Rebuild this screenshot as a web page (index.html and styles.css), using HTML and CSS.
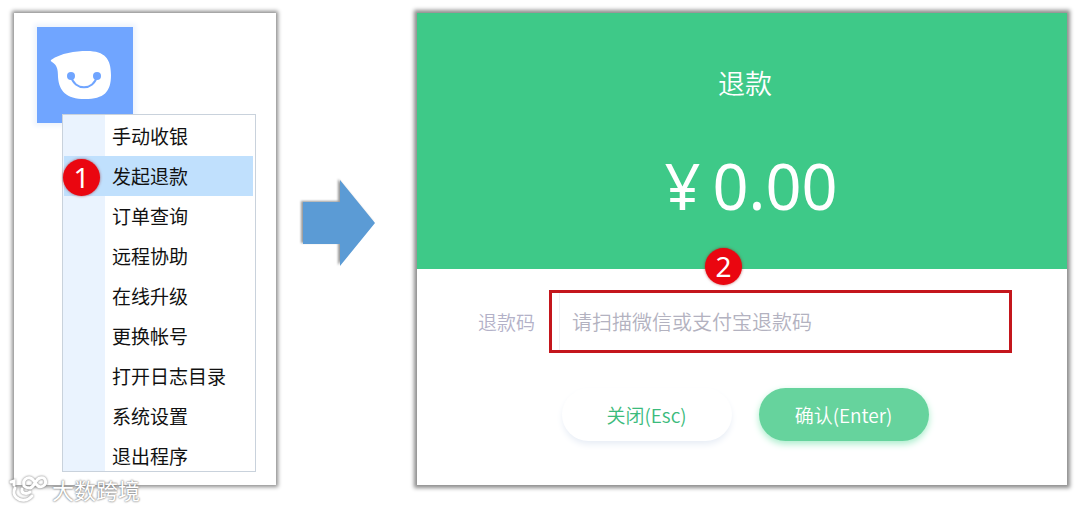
FILE: index.html
```
<!DOCTYPE html>
<html lang="zh-CN">
<head>
    <meta charset="UTF-8">
    <meta name="viewport" content="width=device-width, initial-scale=1.0">
    <title>发起退款</title>
    <link rel="stylesheet" href="styles.css">
</head>
<body>
    <main class="guide">
        <section class="panel menu-panel">
            <div class="app-icon">
                <svg viewBox="0 0 96 96" role="img" aria-label="收银助手">
                    <path fill="#fff" d="M14 33 C24 26 38 24 50 24 C68 24 74 32 74 48 C74 65 67 72 48 72 C29 72 22 64 21 50 C21 42 20 38 15 35 Q13 34 14 33 Z"/>
                    <circle cx="34" cy="49" r="4" fill="#70a5ff"/>
                    <circle cx="60" cy="49" r="4" fill="#70a5ff"/>
                    <path fill="none" stroke="#70a5ff" stroke-width="2" d="M34 49 C37 64 57 64 60 49"/>
                </svg>
            </div>
            <nav class="menu">
                <ul class="menu-list">
                    <li><button class="menu-item" type="button">手动收银</button></li>
                    <li>
                        <button class="menu-item active" type="button">发起退款</button>
                        <span class="step step-menu">1</span>
                    </li>
                    <li><button class="menu-item" type="button">订单查询</button></li>
                    <li><button class="menu-item" type="button">远程协助</button></li>
                    <li><button class="menu-item" type="button">在线升级</button></li>
                    <li><button class="menu-item" type="button">更换帐号</button></li>
                    <li><button class="menu-item" type="button">打开日志目录</button></li>
                    <li><button class="menu-item" type="button">系统设置</button></li>
                    <li><button class="menu-item" type="button">退出程序</button></li>
                </ul>
            </nav>
        </section>

        <svg class="arrow" viewBox="0 0 72 86" aria-hidden="true">
            <path fill="#5b9bd5" d="M0 22 H37 V0 L72 43 L37 86 V64 H0 Z"/>
        </svg>

        <section class="panel refund">
            <header class="refund-header">
                <h1 class="refund-title">退款</h1>
                <p class="amount"><span class="currency">¥</span>0.00</p>
            </header>
            <form class="refund-form">
                <div class="field">
                    <label class="field-label" for="code">退款码</label>
                    <div class="field-box">
                        <input class="field-input" id="code" type="text" placeholder="请扫描微信或支付宝退款码">
                        <span class="step step-field">2</span>
                    </div>
                </div>
                <div class="actions">
                    <button class="btn btn-close" type="button">关闭(Esc)</button>
                    <button class="btn btn-confirm" type="button">确认(Enter)</button>
                </div>
            </form>
        </section>
    </main>

    <div class="watermark">
        <svg class="watermark-logo" viewBox="0 0 38 28" aria-hidden="true">
            <path d="M1 7 L4 6 V10 M5 13 C1 21 9 26 15 25 C18 25 20 23 22 21 M20 17 C16 20 11 18 12 14"/>
            <path d="M14 11 C12 3 20 0 24 6 C27 11 29 13 33 11 C38 8 35 1 30 3 C25 4 25 12 20 13 C17 13 15 12 14 11"/>
        </svg>
        <span>大数跨境</span>
    </div>
</body>
</html>
```

FILE: styles.css
```
* {
    margin: 0;
    padding: 0;
    box-sizing: border-box;
}

body {
    font-family: 'Noto Sans CJK SC', 'Noto Sans', sans-serif;
    color: #111;
    background: #fff;
    position: relative;
}

button,
input {
    font-family: inherit;
    border: none;
    background: none;
}

.guide {
    display: flex;
    align-items: stretch;
    padding: 13px 13px 24px 14px;
}

.panel {
    background: #fff;
}

/* 左侧菜单 */
.menu-panel {
    width: 262px;
    padding: 14px 20px 13px 23px;
    box-shadow: 0 0 4px 2px rgba(0, 0, 0, 0.45);
}

.app-icon {
    width: 96px;
    height: 96px;
    background: #70a5ff;
    box-shadow: 0 0 5px 3px #edf3fc;
}

.app-icon svg {
    display: block;
}

.menu {
    position: relative;
    margin: -9px 0 0 25px;
    padding: 1px 2px 0 1px;
    border: 1px solid #c9d2dc;
    background: linear-gradient(to right, #eaf3fe 42px, #fff 42px);
}

.menu-list {
    list-style: none;
    margin-bottom: -5px;
}

.menu-list li {
    position: relative;
}

.menu-item {
    display: block;
    width: 100%;
    height: 40px;
    padding-left: 48px;
    font-size: 19px;
    line-height: 40px;
    text-align: left;
    color: #111;
}

.menu-item.active {
    background: #c0e0fd;
}

/* 步骤序号 */
.step {
    position: absolute;
    width: 37px;
    height: 37px;
    border-radius: 50%;
    background: #ea0610;
    box-shadow: 0 0 3px rgba(150, 0, 0, 0.6);
    color: #fff;
    font-family: 'Noto Sans', sans-serif;
    font-size: 28px;
    line-height: 37px;
    text-align: center;
}

.step-menu {
    left: -1px;
    top: 3px;
}

.step-field {
    left: 153px;
    top: -45px;
}

.arrow {
    flex: none;
    align-self: flex-start;
    width: 72px;
    height: 86px;
    margin: 167px 42px 0 27px;
    filter: drop-shadow(-2px -1px 1px rgba(0, 0, 0, 0.4));
}

/* 退款窗口 */
.refund {
    flex: 1;
    box-shadow: 0 0 4px 3px rgba(0, 0, 0, 0.45);
}

.refund-header {
    height: 256px;
    padding: 50px 0 0 6px;
    background: #3ec988;
    color: #fff;
    text-align: center;
}

.refund-title {
    font-size: 27px;
    font-weight: 350;
    line-height: 40px;
}

.amount {
    margin-top: 35px;
    padding-left: 12px;
    font-family: 'Noto Sans', sans-serif;
    font-size: 63px;
    line-height: 96px;
}

.currency {
    margin-right: 12px;
}

.refund-form {
    padding: 21px 55px 41px 61px;
}

.field {
    display: flex;
    align-items: center;
}

.field-label {
    width: 71px;
    font-size: 19px;
    font-weight: 350;
    color: #b3b1c8;
}

.field-box {
    position: relative;
    flex: 1;
    padding: 0 0 0 7px;
    border: 3px solid #c4161c;
}

.field-input {
    display: block;
    width: 100%;
    height: 57px;
    padding-left: 12px;
    border-left: 1px solid #f0f0f4;
    font-size: 20px;
    font-weight: 350;
    outline: none;
}

.field-input::placeholder {
    color: #b3b2c0;
    opacity: 1;
}

.actions {
    display: flex;
    justify-content: center;
    gap: 27px;
    margin-top: 35px;
}

.btn {
    width: 170px;
    height: 53px;
    border-radius: 27px;
    font-size: 19px;
    font-weight: 350;
}

.btn-close {
    background: #fff;
    box-shadow: 0 4px 7px -1px #e6ecf5;
    color: #3bbb7c;
}

.btn-confirm {
    background: #66d39d;
    box-shadow: 0 3px 7px #a9edcb;
    color: #fff;
}

/* 水印 */
.watermark {
    position: absolute;
    left: 10px;
    bottom: 4px;
    display: flex;
    align-items: center;
    gap: 4px;
    font-size: 22px;
    line-height: 32px;
    color: #fff;
    text-shadow: 0 0 2px #777, 0 0 2px #999;
}

.watermark-logo {
    width: 38px;
    height: 28px;
    fill: none;
    stroke: #fff;
    stroke-width: 3;
    stroke-linecap: round;
    overflow: visible;
    filter: drop-shadow(0 0 1px #777);
}
```
